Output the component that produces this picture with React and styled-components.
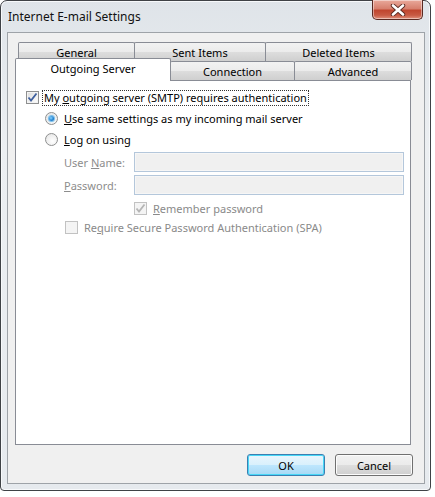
import React from 'react'
import styled, { createGlobalStyle } from 'styled-components'

const Global = createGlobalStyle`
  html, body {
    margin: 0;
    padding: 0;
    background: #ffffff;
  }
  body {
    font-family: "Noto Sans", "Open Sans", sans-serif;
    font-size: 11px;
    color: #000;
  }
`

const Window = styled.div`
  width: 431px;
  height: 491px;
  border: 1px solid #3f4246;
  border-radius: 7px 7px 4px 4px;
  background: linear-gradient(180deg, #dfe4e9 0%, #eceff2 30%, #e6eaee 100%);
  box-shadow: inset 0 0 0 1px #f7f9fb;
  display: flex;
  flex-direction: column;
  box-sizing: border-box;
`

const TitleBar = styled.div`
  height: 31px;
  display: flex;
  align-items: flex-start;
  justify-content: space-between;
  padding-left: 7px;
`

const TitleText = styled.div`
  font-size: 12px;
  margin-top: 7px;
  color: #111;
`

const CloseBtn = styled.div`
  width: 49px;
  height: 19px;
  margin-right: 7px;
  margin-top: -1px;
  border: 1px solid #5a2a22;
  border-top: none;
  border-radius: 0 0 5px 5px;
  background: linear-gradient(180deg, #e9a99b 0%, #d7806e 45%, #c0462f 55%, #c85a43 80%, #e0917d 100%);
  box-shadow: inset 0 0 0 1px rgba(255,255,255,0.45);
  display: flex;
  align-items: center;
  justify-content: center;
`

const Client = styled.div`
  margin: 0 5px 0 6px;
  height: 452px;
  background: #f0f0f0;
  border: 1px solid #9ea3a8;
  box-sizing: border-box;
  padding: 9px 13px 0 7px;
  display: flex;
  flex-direction: column;
`

const TabArea = styled.div`
  display: flex;
  flex-direction: column;
`

const TabRow = styled.div`
  display: flex;
  height: ${p => p.$h}px;
  padding: 0 ${p => p.$pr}px 0 ${p => p.$pl}px;
`

const Tab = styled.div`
  flex: 0 0 ${p => p.$w}px;
  box-sizing: border-box;
  border: 1px solid #898c95;
  border-bottom: none;
  margin-left: -1px;
  border-radius: 2px 2px 0 0;
  background: linear-gradient(180deg, #f2f2f2 0%, #ebebeb 50%, #dddddd 51%, #cfcfcf 100%);
  display: flex;
  justify-content: center;
  padding-top: ${p => p.$pt}px;
  white-space: nowrap;
  &:first-child { margin-left: 0; }
`

const ActiveTab = styled.div`
  flex: 0 0 ${p => p.$w}px;
  box-sizing: border-box;
  height: 23px;
  margin-top: -3px;
  margin-bottom: -1px;
  border: 1px solid #898c95;
  border-bottom: none;
  border-radius: 2px 2px 0 0;
  background: #ffffff;
  position: relative;
  z-index: 1;
  display: flex;
  justify-content: center;
  padding-top: 2px;
  white-space: nowrap;
`

const Panel = styled.div`
  height: 365px;
  background: #ffffff;
  border: 1px solid #898c95;
  box-sizing: border-box;
  padding: 8px 0 0 10px;
  display: flex;
  flex-direction: column;
`

const CheckRow = styled.div`
  display: flex;
  align-items: center;
  height: 17px;
  margin: ${p => p.$m || '0'};
  color: ${p => (p.$disabled ? '#8a8a8a' : '#000')};
`

const Box = styled.div`
  width: 13px;
  height: 13px;
  box-sizing: border-box;
  border: 1px solid ${p => (p.$disabled ? '#c2c2c2' : '#8e8f8f')};
  background: ${p => (p.$disabled ? '#f4f4f4' : 'linear-gradient(135deg, #dcdcdc 0%, #ffffff 100%)')};
  box-shadow: inset 0 0 0 1px ${p => (p.$disabled ? '#f4f4f4' : '#f3f3f3')};
  display: flex;
  align-items: center;
  justify-content: center;
  flex: none;
`

const Radio = styled.div`
  width: 13px;
  height: 13px;
  box-sizing: border-box;
  border-radius: 50%;
  border: 1px solid #8e8f8f;
  background: radial-gradient(circle at 60% 65%, #ffffff 0%, #e2e2e2 100%);
  display: flex;
  align-items: center;
  justify-content: center;
  flex: none;
`

const RadioDot = styled.div`
  width: 5px;
  height: 5px;
  border-radius: 50%;
  background: radial-gradient(circle at 40% 40%, #8ad4ff 0%, #1d7fd0 60%, #0b4b91 100%);
  box-shadow: 0 0 1px 1px #6bb7e8;
`

const Label = styled.span`
  margin-left: ${p => p.$ml || 4}px;
  padding: 0 1px;
  line-height: 14px;
  border: 1px ${p => (p.$focus ? 'dotted #333' : 'solid transparent')};
  white-space: nowrap;
`

const Key = styled.span`
  text-decoration: underline;
`

const FieldRow = styled.div`
  display: flex;
  align-items: center;
  margin: ${p => p.$m || '0'};
  padding-left: 38px;
  color: #8d8d8d;
`

const FieldLabel = styled.div`
  width: 70px;
  flex: none;
`

const Input = styled.div`
  width: 270px;
  height: 20px;
  box-sizing: border-box;
  border: 1px solid #b4c7db;
  background: #f0f0f0;
  box-shadow: inset 0 0 0 1px #f6f6f6;
`

const ButtonBar = styled.div`
  display: flex;
  justify-content: flex-end;
  gap: 10px;
  margin-top: 9px;
  margin-right: -2px;
`

const Button = styled.div`
  width: 78px;
  height: 22px;
  box-sizing: border-box;
  border-radius: 3px;
  border: 1px solid ${p => (p.$default ? '#3c7fb1' : '#707070')};
  background: ${p =>
    p.$default
      ? 'linear-gradient(180deg, #eaf6fd 0%, #d9f0fc 50%, #bee6fd 51%, #a7d9f5 100%)'
      : 'linear-gradient(180deg, #f2f2f2 0%, #ebebeb 50%, #dddddd 51%, #cfcfcf 100%)'};
  box-shadow: inset 0 0 0 1px ${p => (p.$default ? '#48d7f7' : '#fcfcfc')};
  display: flex;
  align-items: center;
  justify-content: center;
`

const Check = ({ color }) => (
  <svg width="11" height="11" viewBox="0 0 11 11">
    <path d="M1.5 5.5 L4 8.5 L9.5 1.5" fill="none" stroke={color} strokeWidth="1.8" />
  </svg>
)

export default function App() {
  return (
    <>
      <Global />
      <Window>
        <TitleBar>
          <TitleText>Internet E-mail Settings</TitleText>
          <CloseBtn>
            <svg width="16" height="12" viewBox="0 0 16 12">
              <path d="M3 1.5 L13 10.5 M13 1.5 L3 10.5" stroke="#5a2a22" strokeWidth="4.4" strokeLinecap="round" />
              <path d="M3 1.5 L13 10.5 M13 1.5 L3 10.5" stroke="#ffffff" strokeWidth="2.6" strokeLinecap="round" />
            </svg>
          </CloseBtn>
        </TitleBar>
        <Client>
          <TabArea>
            <TabRow $h={19} $pl={3} $pr={2}>
              <Tab $w={117} $pt={2}>General</Tab>
              <Tab $w={132} $pt={2}>Sent Items</Tab>
              <Tab $w={147} $pt={2}>Deleted Items</Tab>
            </TabRow>
            <TabRow $h={19} $pl={0} $pr={0}>
              <ActiveTab $w={156}>Outgoing Server</ActiveTab>
              <Tab $w={125} $pt={2}>Connection</Tab>
              <Tab $w={118} $pt={2}>Advanced</Tab>
            </TabRow>
          </TabArea>
          <Panel>
            <CheckRow>
              <Box>
                <Check color="#3e5f9e" />
              </Box>
              <Label $focus $ml={3}>
                My <Key>o</Key>utgoing server (SMTP) requires authentication
              </Label>
            </CheckRow>
            <CheckRow $m="4px 0 0 19px">
              <Radio>
                <RadioDot />
              </Radio>
              <Label>
                <Key>U</Key>se same settings as my incoming mail server
              </Label>
            </CheckRow>
            <CheckRow $m="4px 0 0 19px">
              <Radio />
              <Label>
                <Key>L</Key>og on using
              </Label>
            </CheckRow>
            <FieldRow $m="4px 0 0 0">
              <FieldLabel>
                User <Key>N</Key>ame:
              </FieldLabel>
              <Input />
            </FieldRow>
            <FieldRow $m="3px 0 0 0">
              <FieldLabel>
                <Key>P</Key>assword:
              </FieldLabel>
              <Input />
            </FieldRow>
            <CheckRow $m="5px 0 0 108px" $disabled>
              <Box $disabled>
                <Check color="#b5b5b5" />
              </Box>
              <Label>
                <Key>R</Key>emember password
              </Label>
            </CheckRow>
            <CheckRow $m="2px 0 0 39px" $disabled>
              <Box $disabled />
              <Label>
                Re<Key>q</Key>uire Secure Password Authentication (SPA)
              </Label>
            </CheckRow>
          </Panel>
          <ButtonBar>
            <Button $default>OK</Button>
            <Button>Cancel</Button>
          </ButtonBar>
        </Client>
      </Window>
    </>
  )
}
